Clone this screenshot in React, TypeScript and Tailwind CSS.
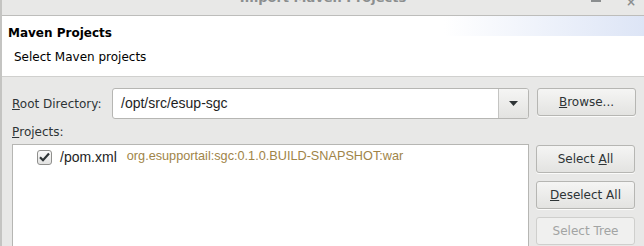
import React from "react";

const dv = { fontFamily: '"DejaVu Sans", sans-serif' };
const lib = { fontFamily: '"Liberation Sans", Arial, sans-serif' };

function Btn({ children, disabled }: { children: React.ReactNode; disabled?: boolean }) {
  return (
    <div
      className={
        "w-[99px] h-[28px] rounded-[3px] border flex items-center justify-center text-[12px] " +
        (disabled
          ? "border-[#cfcfcd] bg-[#f0f0ef] text-[#a2a4a3]"
          : "border-[#b6b6b3] bg-gradient-to-b from-[#f5f5f4] to-[#e3e3e1] text-[#2e3436] shadow-[0_1px_0_rgba(255,255,255,0.8)]")
      }
    >
      {children}
    </div>
  );
}

export default function App() {
  return (
    <div className="w-[644px] h-[246px] overflow-hidden bg-[#e8e8e7] border-l-2 border-[#c4c4c2] text-[#2e3436]" style={dv}>
      {/* title bar */}
      <div className="relative h-[16px] border-b border-[#bdbdbb] bg-[#e8e8e7] overflow-hidden">
        <div className="absolute left-0 right-0 top-[-12px] text-center text-[13px] font-bold text-[#8b8e8f]">
          Import Maven Projects
        </div>
        <div className="absolute left-[589px] top-[-3px] w-[10px] h-[5px] bg-[#8b8e8f]" />
        <div className="absolute left-[624px] top-[-7px] text-[12px] font-bold text-[#8b8e8f]">×</div>
      </div>
      {/* header */}
      <div className="relative h-[61px] bg-white border-b border-[#d0d0ce]">
        <div className="absolute right-0 top-0 w-[200px] h-[20px] bg-gradient-to-r from-white to-[#dde5f6]" />
        <div className="relative pl-[6px] pt-[8px] text-[12px] font-bold text-[#000]">Maven Projects</div>
        <div className="relative pl-[12px] pt-[6px] text-[12px] text-[#000]">Select Maven projects</div>
      </div>
      {/* body */}
      <div className="pl-[10px] pt-[11px]">
        <div className="flex items-center h-[31px]">
          <div className="w-[100px] text-[12px]">
            <span className="underline">R</span>oot Directory:
          </div>
          <div className="flex h-[31px] w-[417px] rounded-[3px] border border-[#b6b6b3] bg-white overflow-hidden">
            <div className="flex-1 flex items-center pl-[8px] text-[14px] text-[#1e1e1e]" style={lib}>
              /opt/src/esup-sgc
            </div>
            <div className="w-[30px] border-l border-[#c4c4c2] bg-gradient-to-b from-[#f5f5f4] to-[#e3e3e1] flex items-center justify-center">
              <svg width="9" height="5" viewBox="0 0 9 5"><path d="M0 0h9L4.5 5z" fill="#2e3436" /></svg>
            </div>
          </div>
          <div className="ml-[8px] -mt-[3px]">
            <Btn><span><span className="underline">B</span>rowse...</span></Btn>
          </div>
        </div>
        <div className="h-[24px] flex items-center text-[12px] mt-[1px]">
          <span className="underline">P</span>rojects:
        </div>
        <div className="flex">
          <div className="w-[517px] h-[110px] border border-[#b6b6b3] bg-white">
            <div className="flex items-center h-[23px] pt-[1px]">
              <div className="ml-[24px] w-[15px] h-[15px] rounded-[3px] border border-[#8f8f8d] bg-gradient-to-b from-[#fafafa] to-[#e2e2e1] flex items-center justify-center">
                <svg width="11" height="10" viewBox="0 0 11 10"><path d="M1 5.2l3 3L10 1.5" stroke="#2e3436" strokeWidth="2.2" fill="none" /></svg>
              </div>
              <span className="ml-[8px] text-[14px] text-[#1e1e1e]" style={lib}>/pom.xml</span>
              <span className="ml-[10px] text-[12.7px] text-[#a08448]" style={lib}>org.esupportail:sgc:0.1.0.BUILD-SNAPSHOT:war</span>
            </div>
          </div>
          <div className="ml-[7px] flex flex-col gap-[8px] pt-[1px]">
            <Btn><span>Select <span className="underline">A</span>ll</span></Btn>
            <Btn><span><span className="underline">D</span>eselect All</span></Btn>
            <Btn disabled>Select Tree</Btn>
          </div>
        </div>
      </div>
    </div>
  );
}
